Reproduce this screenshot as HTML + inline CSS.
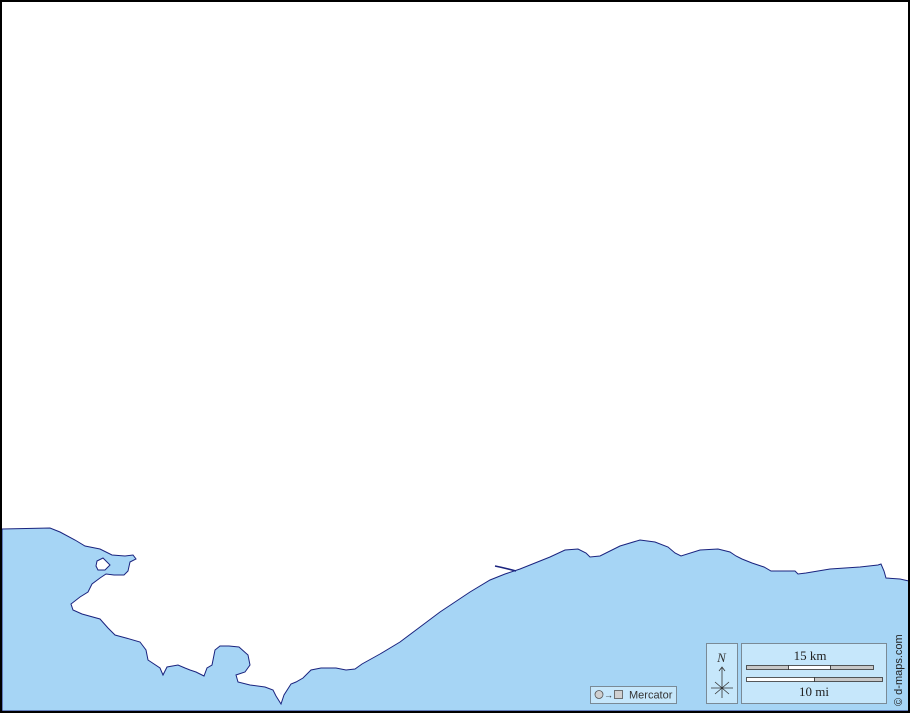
<!DOCTYPE html>
<html><head><style>
body{margin:0;width:910px;height:713px;overflow:hidden;background:#fff;font-family:"Liberation Serif",serif}
</style></head><body>
<svg width="910" height="713" viewBox="0 0 910 713" xmlns="http://www.w3.org/2000/svg">
<rect x="0" y="0" width="910" height="713" fill="#fff"/>
<path fill="#a6d5f5" fill-rule="evenodd" stroke="#1a237e" stroke-width="1" d="M2,529 L50,528 L60,532 L75,540 L85,546 L100,549 L112,555 L125,556 L133,555 L136,559 L130,562 L128,571 L124,575 L114,575 L106,574 L100,578 L92,584 L88,592 L80,597 L71,604 L73,610 L82,614 L100,619 L108,628 L115,635 L126,638 L140,642 L146,650 L148,660 L160,668 L163,675 L167,667 L178,665 L185,668 L190,670 L196,672 L204,676 L207,668 L212,665 L215,650 L220,646 L229,646 L239,647 L248,655 L250,665 L245,672 L236,675 L238,682 L250,685 L265,687 L273,690 L276,696 L281,704 L284,695 L291,684 L296,682 L303,678 L311,670 L321,668 L336,668 L346,670 L355,669 L362,664 L380,654 L400,642 L420,627 L440,612 L452,604 L470,592 L490,580 L505,574 L520,569 L535,563 L550,557 L565,550 L578,549 L586,553 L590,557 L600,556 L620,546 L640,540 L655,542 L668,547 L675,553 L681,556 L700,550 L718,549 L730,552 L736,556 L742,559 L752,563 L764,567 L771,571 L782,571 L795,571 L798,574 L806,573 L830,569 L860,567 L878,565 L881,564 L884,571 L886,578 L900,579 L909,581 L909,711 L2,711 Z M97,561 L103,558 L110,565 L105,570 L98,570 L96,566 Z"/>
<path d="M495,566 Q505,568 516,571" stroke="#1a237e" stroke-width="1.5" fill="none"/>
<rect x="1" y="1" width="908" height="711" fill="none" stroke="#000" stroke-width="2"/>
<rect x="590.5" y="686.5" width="86" height="17" fill="#c6e7fb" stroke="#7a8a96"/>
<circle cx="599" cy="694.5" r="4" fill="#d0d0d0" stroke="#555" stroke-width="0.8"/>
<text x="604" y="698" font-family="Liberation Sans,sans-serif" font-size="9" fill="#333">→</text>
<rect x="614.5" y="690.5" width="8" height="8" fill="#d0d0d0" stroke="#555" stroke-width="0.8"/>
<text x="629" y="698.5" font-family="Liberation Sans,sans-serif" font-size="11" fill="#333">Mercator</text>
<rect x="706.5" y="643.5" width="31" height="60" fill="#c6e7fb" stroke="#7a8a96"/>
<text x="721.5" y="662" font-size="13" font-style="italic" text-anchor="middle" fill="#333">N</text>
<path d="M722,668 L722,698 M719,671 L722,667 L725,671 M711,688 L733,688 M715,682 L729,694 M729,682 L715,694" stroke="#333" stroke-width="0.8" fill="none"/>
<rect x="741.5" y="643.5" width="145" height="60" fill="#c6e7fb" stroke="#7a8a96"/>
<text x="810" y="660" font-size="13" text-anchor="middle" fill="#222">15 km</text>
<rect x="746.5" y="665.5" width="42" height="4" fill="#c8c8c8" stroke="#333" stroke-width="0.8"/>
<rect x="788.5" y="665.5" width="42" height="4" fill="#fff" stroke="#333" stroke-width="0.8"/>
<rect x="830.5" y="665.5" width="43" height="4" fill="#c8c8c8" stroke="#333" stroke-width="0.8"/>
<rect x="746.5" y="677.5" width="68" height="4" fill="#fff" stroke="#333" stroke-width="0.8"/>
<rect x="814.5" y="677.5" width="68" height="4" fill="#c8c8c8" stroke="#333" stroke-width="0.8"/>
<text x="814" y="696" font-size="13" text-anchor="middle" fill="#222">10 mi</text>
<text transform="translate(902,706) rotate(-90)" font-family="Liberation Sans,sans-serif" font-size="11" fill="#222">© d-maps.com</text>
</svg>
</body></html>
